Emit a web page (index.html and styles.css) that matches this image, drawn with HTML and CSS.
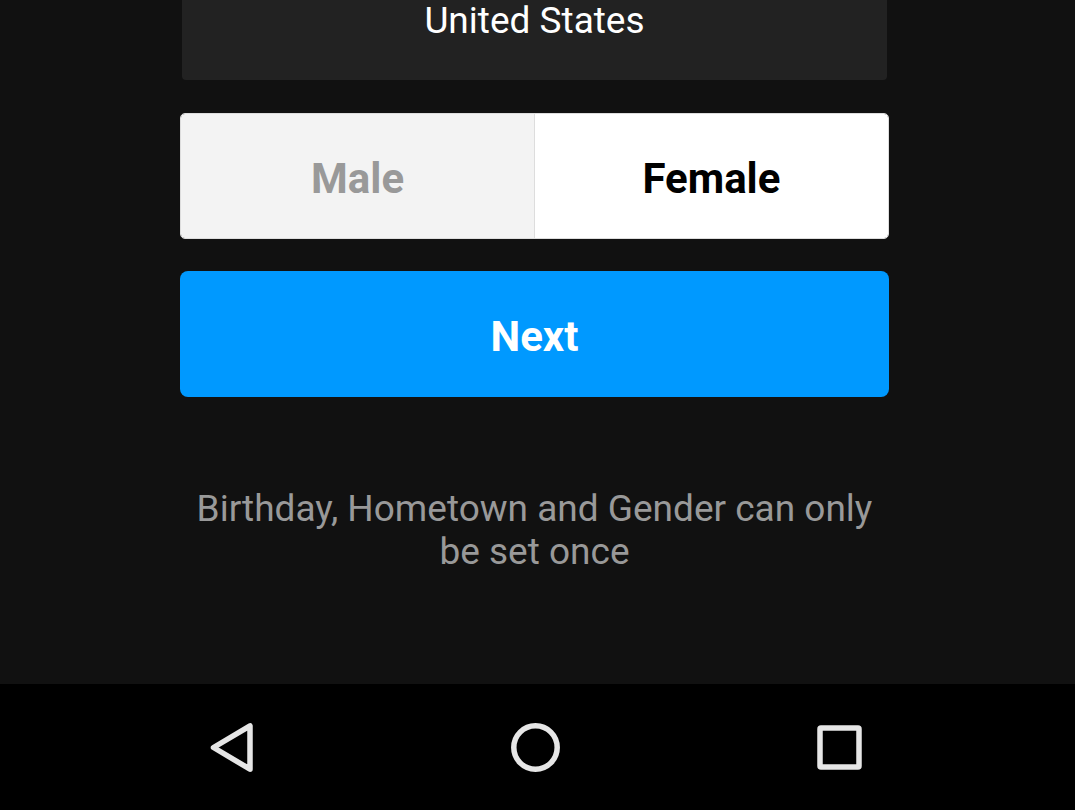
FILE: index.html
```html
<!DOCTYPE html>
<html lang="en">
<head>
<meta charset="utf-8">
<meta name="viewport" content="width=device-width, initial-scale=1">
<title>Profile setup</title>
<link rel="stylesheet" href="styles.css">
</head>
<body>
<main class="screen">
  <form class="form">
    <button class="country" type="button">United States</button>
    <div class="gender" role="group" aria-label="Gender">
      <button class="option" type="button" aria-pressed="false">Male</button>
      <button class="option selected" type="button" aria-pressed="true">Female</button>
    </div>
    <button class="next" type="button">Next</button>
    <p class="note">Birthday, Hometown and Gender can only be set once</p>
  </form>
</main>
<nav class="navbar" aria-label="System navigation">
  <button class="nav-button" type="button" aria-label="Back">
    <svg class="icon" viewBox="0 0 56 56"><path d="M47 6.800V50.200L10.500 28.500Z"/></svg>
  </button>
  <button class="nav-button" type="button" aria-label="Home">
    <svg class="icon" viewBox="0 0 56 56"><circle cx="28.500" cy="28.500" r="21.700"/></svg>
  </button>
  <button class="nav-button" type="button" aria-label="Recent apps">
    <svg class="icon" viewBox="0 0 56 56"><rect x="9" y="9" width="39" height="39" rx="1"/></svg>
  </button>
</nav>
</body>
</html>
```
FILE: styles.css
```css
* { box-sizing: border-box; }

body {
  margin: 0;
  min-height: 100vh;
  display: flex;
  flex-direction: column;
  background: #111;
  font-family: Roboto, "Liberation Sans", sans-serif;
}

button {
  border: 0;
  padding: 0;
  font: inherit;
  cursor: pointer;
}

.screen {
  flex: 1;
  display: flex;
  justify-content: center;
  padding-right: 6px;
}

.form {
  width: 66.3%;
  display: flex;
  flex-direction: column;
}

.country {
  height: 80px;
  margin: 0 2px 33px;
  padding-bottom: 38px;
  border-radius: 0 0 4px 4px;
  background: #222;
  color: #fff;
  font-size: 37px;
  line-height: 42px;
}

.gender {
  display: flex;
  height: 126px;
  margin-bottom: 32px;
  border: 1px solid #ddd;
  border-radius: 5px;
  overflow: hidden;
}

.option {
  flex: 1;
  padding-top: 4px;
  border-right: 1px solid #ddd;
  background: #f3f3f3;
  color: #999;
  font-size: 42px;
  font-weight: 700;
}

.option.selected {
  border-right: 0;
  background: #fff;
  color: #000;
}

.next {
  height: 126px;
  padding-top: 4px;
  border-radius: 8px;
  background: #09f;
  color: #fff;
  font-size: 42px;
  font-weight: 700;
}

.note {
  margin: 90px 0 0;
  color: #999;
  font-size: 37px;
  line-height: 43px;
  text-align: center;
}

.navbar {
  display: flex;
  justify-content: center;
  gap: 248px;
  height: 126px;
  padding-right: 6px;
  background: #000;
}

.nav-button {
  display: flex;
  align-items: center;
  background: none;
}

.icon {
  width: 56px;
  height: 56px;
  fill: none;
  stroke: #e6e6e6;
  stroke-width: 5.5;
  stroke-linejoin: round;
}
```
